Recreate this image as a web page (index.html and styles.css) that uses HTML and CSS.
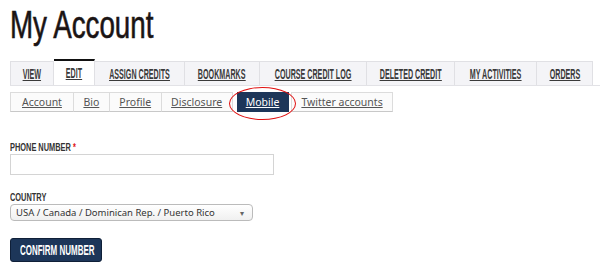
FILE: index.html
```html
<!DOCTYPE html>
<html lang="en">
<head>
  <meta charset="UTF-8">
  <meta name="viewport" content="width=device-width, initial-scale=1.0">
  <title>My Account</title>
  <link rel="stylesheet" href="styles.css">
</head>
<body>
  <h1 class="page-title"><span class="narrow">My Account</span></h1>

  <ul class="tabs">
    <li><a href="#"><span class="narrow">View</span></a></li>
    <li class="active"><a href="#"><span class="narrow">Edit</span></a></li>
    <li><a href="#"><span class="narrow">Assign Credits</span></a></li>
    <li><a href="#"><span class="narrow">Bookmarks</span></a></li>
    <li><a href="#"><span class="narrow">Course Credit Log</span></a></li>
    <li><a href="#"><span class="narrow">Deleted Credit</span></a></li>
    <li><a href="#"><span class="narrow">My Activities</span></a></li>
    <li><a href="#"><span class="narrow">Orders</span></a></li>
  </ul>

  <ul class="subtabs">
    <li><a href="#">Account</a></li>
    <li><a href="#">Bio</a></li>
    <li><a href="#">Profile</a></li>
    <li><a href="#">Disclosure</a></li>
    <li class="active"><a href="#">Mobile</a></li>
    <li><a href="#">Twitter accounts</a></li>
  </ul>

  <form class="mobile-form">
    <div class="field">
      <label for="phone"><span class="narrow">Phone number <span class="req">*</span></span></label>
      <input type="text" id="phone" class="text-input">
    </div>
    <div class="field">
      <label for="country"><span class="narrow">Country</span></label>
      <div class="select" id="country">
        <span>USA / Canada / Dominican Rep. / Puerto Rico</span>
        <span class="arrow">&#9662;</span>
      </div>
    </div>
    <button type="button" class="btn"><span class="narrow">Confirm number</span></button>
  </form>
</body>
</html>
```

FILE: styles.css
```css
body {
  margin: 0;
  padding: 0 0 0 10px;
  background: #fff;
  font-family: "Liberation Sans", Arial, sans-serif;
  color: #222;
}
/* condensed look: no narrow face installed, so squeeze the glyphs */
.narrow {
  display: inline-block;
  white-space: nowrap;
  transform-origin: left center;
}
.page-title {
  margin: 0;
  padding-top: 3px;
  height: 56px;
  font-size: 38px;
  font-weight: normal;
  line-height: 44px;
  color: #1a1414;
}
.page-title .narrow {
  transform: scaleX(0.73);
  -webkit-text-stroke: 0.6px #1a1414;
}
.tabs {
  display: flex;
  list-style: none;
  margin: 0;
  padding: 0;
  height: 26px;
  border-bottom: 1px solid #e2e2e6;
}
.tabs li {
  display: flex;
  align-items: center;
  justify-content: center;
  margin-top: 2px;
  background: #f4f4f7;
  border: 1px solid #e0e0e4;
  border-bottom: none;
  border-left: none;
}
.tabs li:first-child {
  border-left: 1px solid #e0e0e4;
}
.tabs li:nth-child(1) { width: 42px; }
.tabs li:nth-child(2) { width: 40px; }
.tabs li:nth-child(3) { width: 89px; }
.tabs li:nth-child(4) { width: 74px; }
.tabs li:nth-child(5) { width: 106px; }
.tabs li:nth-child(6) { width: 87px; }
.tabs li:nth-child(7) { width: 81px; }
.tabs li:nth-child(8) { width: 55px; }
.tabs li.active {
  margin-top: 0;
  background: #fff;
  border-top: 2px solid #111;
}
.tabs a {
  display: flex;
  justify-content: center;
  width: 0;
  font-size: 14px;
  font-weight: bold;
  text-transform: uppercase;
  color: #3a3a3a;
  text-decoration: underline;
}
.tabs .narrow {
  transform: scaleX(0.51);
  transform-origin: center;
  text-decoration: underline;
}
.subtabs {
  display: flex;
  list-style: none;
  margin: 6px 0 0;
  padding: 0;
}
.subtabs li {
  display: flex;
  align-items: center;
  height: 18px;
  padding: 0 9.5px;
  background: #fbfbfb;
  border: 1px solid #dcdcdc;
  border-left: none;
  border-bottom-color: #c8c8c8;
}
.subtabs li:first-child {
  border-left: 1px solid #dcdcdc;
  padding: 0 11px;
}
.subtabs li.active {
  position: relative;
  background: #1d3659;
  border-color: #1d3659;
  margin-left: 4px;
  padding: 0 9px;
}
.subtabs li.active::after {
  content: "";
  position: absolute;
  left: -8px;
  top: -6px;
  width: 65px;
  height: 31px;
  border: 1.5px solid #e01010;
  border-radius: 50%;
}
.subtabs li.active + li {
  margin-left: 2px;
  border-left: 1px solid #dcdcdc;
  padding: 0 9px;
}
.subtabs a {
  font-family: "Noto Sans", sans-serif;
  font-size: 10.5px;
  color: #555;
  text-decoration: underline;
}
.subtabs li.active a {
  color: #fff;
}
.mobile-form {
  padding-top: 30px;
}
.field {
  margin-bottom: 17px;
}
.field label {
  display: block;
  height: 12px;
  font-size: 10px;
  line-height: 12px;
  font-weight: bold;
  text-transform: uppercase;
  color: #333;
  margin-bottom: 0;
}
.field label .narrow {
  transform: scaleX(0.74);
}
.req {
  color: #d11;
}
.text-input {
  display: block;
  box-sizing: border-box;
  width: 264px;
  height: 21px;
  margin: 0;
  border: 1px solid #d4d4d4;
  background: #fff;
}
.select {
  box-sizing: border-box;
  width: 243px;
  height: 17px;
  display: flex;
  align-items: center;
  justify-content: space-between;
  padding: 0 8px 0 5px;
  border: 1px solid #bbb;
  border-radius: 4px;
  background: linear-gradient(#fff, #f0f0f0);
  font-family: "Noto Sans", sans-serif;
  font-size: 9.5px;
  color: #333;
}
.arrow {
  font-size: 8px;
  color: #666;
}
.btn {
  display: flex;
  align-items: center;
  width: 92px;
  height: 24px;
  margin-top: 1px;
  padding: 0 0 0 9px;
  background: #1d3659;
  border: 1px solid #0f1f38;
  border-radius: 3px;
  color: #fff;
  font-family: "Liberation Sans", Arial, sans-serif;
  font-size: 14px;
  font-weight: bold;
  text-transform: uppercase;
}
.btn .narrow {
  transform: scaleX(0.57);
}
```
